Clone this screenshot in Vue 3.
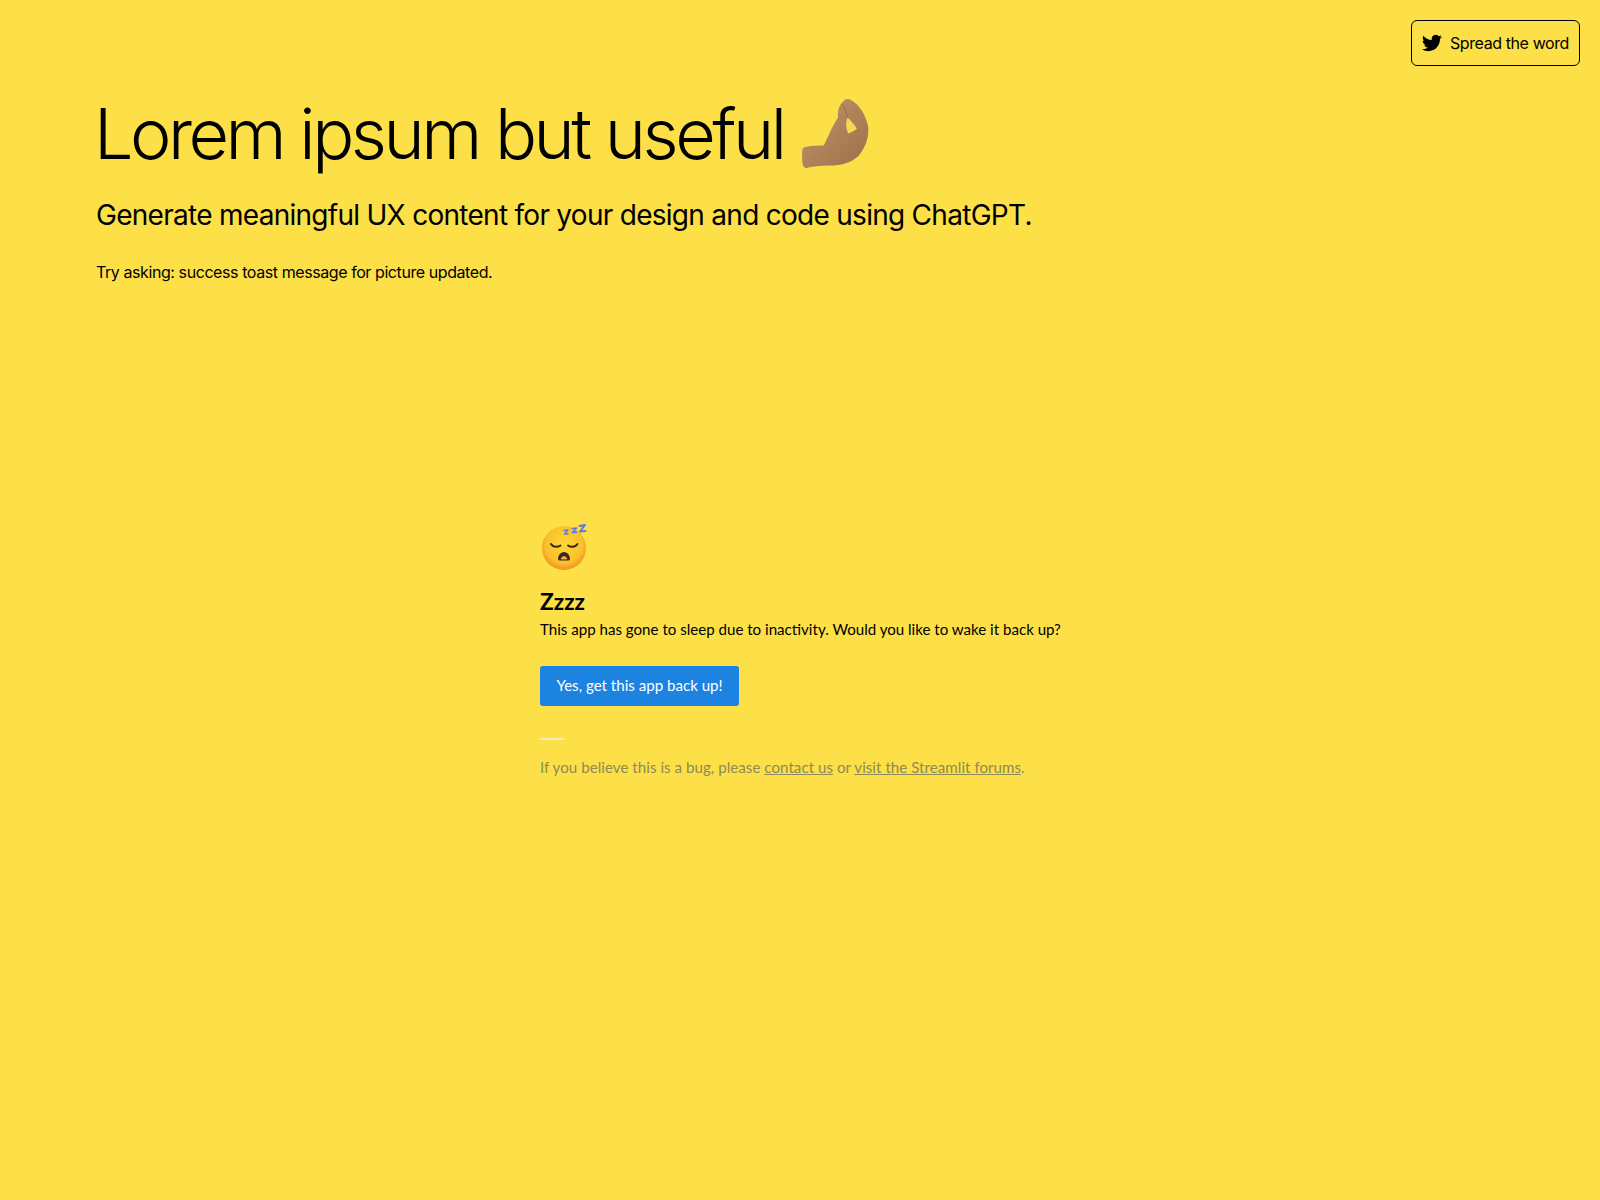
<template>
  <div class="page">
    <header class="top">
      <a class="share" href="#">
        <svg class="bird" viewBox="0 0 24 24" width="20" height="20">
          <path fill="#000" d="M23.95 4.57a10 10 0 0 1-2.82.77 4.96 4.96 0 0 0 2.16-2.72c-.95.55-2 .95-3.12 1.18a4.92 4.92 0 0 0-8.38 4.48C7.69 8.09 4.07 6.13 1.64 3.16a4.82 4.82 0 0 0-.67 2.48c0 1.71.87 3.21 2.19 4.1a4.9 4.9 0 0 1-2.23-.62v.06a4.92 4.92 0 0 0 3.95 4.83 5 5 0 0 1-2.21.08 4.94 4.94 0 0 0 4.6 3.42A9.87 9.87 0 0 1 0 19.54a14 14 0 0 0 7.56 2.21c9.05 0 14-7.5 14-13.98 0-.21 0-.42-.02-.63a9.94 9.94 0 0 0 2.41-2.57z" />
        </svg>
        <span>Spread the word</span>
      </a>
    </header>

    <section class="hero">
      <h1>
        Lorem ipsum but useful
        <svg class="pinch" viewBox="130 50 200 210" width="68" height="71">
          <defs>
            <linearGradient id="skin" x1="0" y1="0" x2="1" y2="1">
              <stop offset="0" stop-color="#c4986c" />
              <stop offset="0.55" stop-color="#ad8058" />
              <stop offset="1" stop-color="#9c7049" />
            </linearGradient>
          </defs>
          <path fill="url(#skin)" d="M132 198C150 190 175 192 194 190C205 170 215 140 236 108C234 90 238 72 250 62C256 52 266 50 274 56C300 70 318 100 325 135C328 165 318 195 298 220C275 242 245 250 210 250C185 250 160 254 142 257C135 258 130 250 130 230C129 215 130 205 132 198Z" />
          <path fill="#f6d75a" d="M264 108C274 118 284 129 292 140C284 147 274 152 266 155C262 146 260 138 260 130C260 122 262 114 264 108Z" />
          <path fill="none" stroke="#9c7049" stroke-width="3" stroke-linecap="round" d="M248 66C256 78 262 92 264 106" />
        </svg>
      </h1>
      <p class="lead">Generate meaningful UX content for your design and code using ChatGPT.</p>
      <p class="hint">Try asking: success toast message for picture updated.</p>
    </section>

    <section class="sleep">
      <svg class="face" viewBox="0 0 50 46" width="50" height="46">
        <defs>
          <radialGradient id="skinface" cx="0.5" cy="0.42" r="0.58">
            <stop offset="0" stop-color="#fdd835" />
            <stop offset="0.72" stop-color="#fbc02d" />
            <stop offset="1" stop-color="#ee9322" />
          </radialGradient>
        </defs>
        <circle cx="24" cy="24" r="22" fill="url(#skinface)" />
        <path fill="none" stroke="#3b2a1a" stroke-width="2" stroke-linecap="round" d="M11 20c2 3.500 7 3.500 9.500 1.500M28 21.500c2.500 2 7.500 2 9.500-1.500" />
        <path fill="#3b2a1a" d="M18 35c0-4 3-7 6-7s6 3 6 7c0 2-3 1.500-6 1.500S18 37 18 35z" />
        <path fill="#f2a65a" d="M20.500 35c1-2 2.500-3 3.500-3s2.500 1 3.500 3c-2 .8-5 .8-7 0z" />
        <g fill="none" stroke="#5c7be0" stroke-linejoin="round" stroke-linecap="round">
          <path stroke-width="1.400" d="M24 6.500L28 6L24.500 10L28 9.800" />
          <path stroke-width="1.700" d="M32 4.500L36.500 4L32.500 8.500L36.500 8.200" />
          <path stroke-width="2" d="M39.500 2L45 1L40 7.500L45.500 7" />
        </g>
      </svg>
      <h2>Zzzz</h2>
      <p class="msg">This app has gone to sleep due to inactivity. Would you like to wake it back up?</p>
      <button class="wake" type="button">Yes, get this app back up!</button>
      <div class="rule"></div>
      <p class="bug">
        If you believe this is a bug, please <a href="#">contact us</a> or <a href="#">visit the Streamlit forums</a>.
      </p>
    </section>
  </div>
</template>

<script setup>
</script>

<style>
html, body {
  margin: 0;
  background: #fde047;
}
</style>

<style scoped>
.page {
  min-height: 1200px;
  background: #fde047;
  color: #000;
  font-family: Inter, "Liberation Sans", sans-serif;
  box-sizing: border-box;
  padding: 20px 20px 0 96px;
}

.top {
  display: flex;
  justify-content: flex-end;
}

.share {
  display: flex;
  align-items: center;
  gap: 8px;
  height: 46px;
  box-sizing: border-box;
  padding: 0 10px;
  border: 1px solid #000;
  border-radius: 6px;
  color: #000;
  font-size: 16px;
  letter-spacing: -0.4px;
  text-decoration: none;
}

.hero {
  margin-top: 25px;
}

h1 {
  display: flex;
  align-items: center;
  gap: 19px;
  margin: 0 0 0 -2px;
  height: 84px;
  font-size: 70px;
  font-weight: 350;
  letter-spacing: -3.5px;
}

.lead {
  margin: 20px 0 0;
  font-size: 28px;
  font-weight: 400;
  letter-spacing: -0.72px;
  line-height: 40px;
}

.hint {
  margin: 26px 0 0;
  font-size: 16px;
  letter-spacing: -0.42px;
  line-height: 22px;
}

.sleep {
  margin: 241px 0 0 444px;
  font-family: Lato, "Noto Sans", sans-serif;
}

.face {
  display: block;
}

h2 {
  margin: 17px 0 0;
  font-size: 22.7px;
  line-height: 30px;
  font-weight: 700;
}

.msg {
  margin: 0;
  font-size: 15.1px;
  line-height: 24px;
}

.wake {
  display: block;
  margin-top: 25px;
  width: 199px;
  height: 40px;
  padding: 0 0 2px;
  border: 0;
  border-radius: 3px;
  background: #1c83e1;
  color: #fff;
  font-family: inherit;
  font-size: 15.1px;
}

.rule {
  width: 24px;
  height: 2px;
  margin-top: 32px;
  background: #f5efc0;
}

.bug {
  margin: 15px 0 0;
  font-size: 15.1px;
  letter-spacing: 0.04px;
  line-height: 24px;
  color: #8d8a58;
}

.bug a {
  color: inherit;
}
</style>
